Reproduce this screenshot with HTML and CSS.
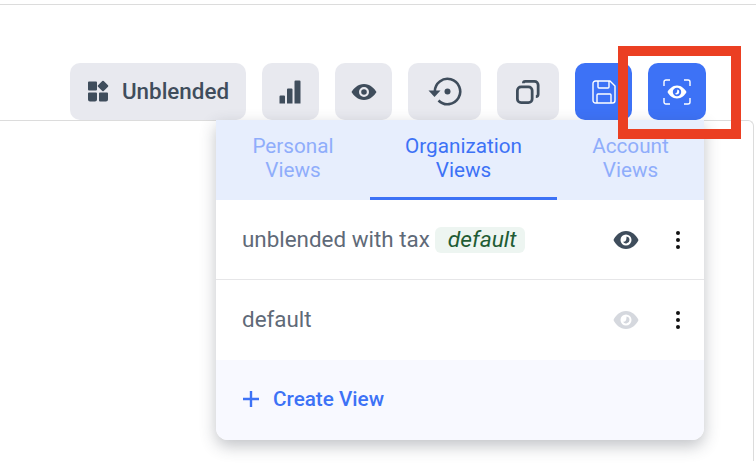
FILE: index.html
```html
<html>
	<head>
		<title>Views</title>
		<meta name="viewport" content="width=device-width, initial-scale=1">
		<link rel="stylesheet" href="styles.css">
	</head>
	<body>

		<div class="topLine"></div>

		<div class="toolbar">
			<button class="btn btnWide">
				<svg width="22" height="22" viewBox="0 0 22 22"><path fill="#3f4d5c" d="M1 2.500a1 1 0 0 1 1-1h7a1 1 0 0 1 1 1v7a1 1 0 0 1-1 1H2a1 1 0 0 1-1-1zM15.300 1l.7-.2.7.2 4.300 4.300a1 1 0 0 1 0 1.400l-4.300 4.300a1 1 0 0 1-1.400 0l-4.300-4.300a1 1 0 0 1 0-1.400zM1 13.500a1 1 0 0 1 1-1h7a1 1 0 0 1 1 1v6a2 2 0 0 1-2 2H3a2 2 0 0 1-2-2zM12 13.500a1 1 0 0 1 1-1h7a1 1 0 0 1 1 1v6a2 2 0 0 1-2 2h-6a1 1 0 0 1-1-1z"/></svg>
				Unblended
			</button>
			<button class="btn">
				<svg width="24" height="24" viewBox="0 0 24 24"><path fill="#3f4d5c" d="M.5 16.500a1 1 0 0 1 1-1H5a1 1 0 0 1 1 1v7H.5zM8 9.500a1 1 0 0 1 1-1h3.500a1 1 0 0 1 1 1v14H8zM15.500 1.500a1 1 0 0 1 1-1h4a1 1 0 0 1 1 1v22h-6z"/></svg>
			</button>
			<button class="btn">
				<svg width="26" height="26" viewBox="0 0 26 26"><path fill="#3f4d5c" fill-rule="evenodd" d="M13 5c6 0 10.500 4.500 12.500 8-2 3.500-6.500 8-12.500 8S2.500 16.500.5 13C2.500 9.500 7 5 13 5zm0 3a5 5 0 1 0 0 10 5 5 0 0 0 0-10zm0 2.200a2.800 2.800 0 1 1 0 5.600 2.800 2.800 0 0 1 0-5.600z"/></svg>
			</button>
			<button class="btn btnHistory">
				<svg width="34" height="30" viewBox="0 0 34 30"><path fill="none" stroke="#3f4d5c" stroke-width="2.600" d="M6.800 14.500A12.700 12.700 0 1 1 10.500 23.500"/><path fill="#3f4d5c" d="M.5 13.500h12l-6 6.500z"/><circle cx="19.500" cy="14.500" r="3" fill="#3f4d5c"/></svg>
			</button>
			<button class="btn btnCopy">
				<svg width="24" height="24" viewBox="0 0 26 26"><g fill="none" stroke="#3f4d5c" stroke-width="3"><rect x="1.500" y="7.500" width="16" height="17" rx="4"/><path d="M8 3.500a2 2 0 0 1 2-2h10a4 4 0 0 1 4 4v10a2.500 2.500 0 0 1-2.500 2.500"/></g></svg>
			</button>
			<button class="btn btnBlue">
				<svg width="24" height="24" viewBox="0 0 24 24"><g fill="none" stroke="#fff" stroke-width="1.400" stroke-linejoin="round"><path d="M1 3.500A2.500 2.500 0 0 1 3.500 1H18l5 5v14.500a2.500 2.500 0 0 1-2.500 2.500h-17A2.500 2.500 0 0 1 1 20.500z"/><path d="M6 1v6a1 1 0 0 0 1 1h9a1 1 0 0 0 1-1V1"/><path d="M5 23v-8a1 1 0 0 1 1-1h12a1 1 0 0 1 1 1v8"/></g></svg>
			</button>
			<button class="btn btnBlue btnLast">
				<svg width="28" height="26" viewBox="0 0 28 26"><g fill="none" stroke="#fff" stroke-width="1.400"><path d="M1 7V3a2 2 0 0 1 2-2h4M21 1h4a2 2 0 0 1 2 2v4M27 19v4a2 2 0 0 1-2 2h-4M7 25H3a2 2 0 0 1-2-2v-4"/></g><path fill="#fff" fill-rule="evenodd" d="M14 6.500c4.500 0 8 3.500 9.500 6.500-1.500 3-5 6.500-9.500 6.500S6 16 4.500 13C6 10 9.500 6.500 14 6.500zm0 2.300a4.200 4.200 0 1 0 0 8.400 4.200 4.200 0 0 0 0-8.400zm.3 1.700a2.500 2.500 0 0 1 2 2.600 2.500 2.500 0 0 1-4.500 1.300c1.500.2 2.600-.8 2.500-3.900z"/></svg>
			</button>
		</div>

		<div class="card"></div>

		<div class="menu">
			<div class="tabs">
				<div class="tab tabPersonal">Personal<br/>Views</div>
				<div class="tab tabOrg">Organization<br/>Views</div>
				<div class="tab tabAccount">Account<br/>Views</div>
			</div>

			<div class="row rowLine">
				<span class="rowName">unblended with tax</span>
				<span class="tag">default</span>
				<svg class="rowEye" width="26" height="20" viewBox="0 0 26 20"><path fill="#3f4d5c" fill-rule="evenodd" d="M13 1c6 0 10.500 4.500 12.500 9-2 4.500-6.500 9-12.500 9S2.500 14.500.5 10C2.500 5.500 7 1 13 1zm0 3.500a5.500 5.500 0 1 0 0 11 5.500 5.500 0 0 0 0-11zm.5 2a3.500 3.500 0 0 1 3 3.500 3.500 3.500 0 0 1-6.500 1.800c2 .3 3.600-1 3.500-5.300z"/></svg>
				<div class="dots"><i></i><i></i><i></i></div>
			</div>

			<div class="row">
				<span class="rowName rowNameLast">default</span>
				<svg class="rowEye" width="26" height="20" viewBox="0 0 26 20"><path fill="#d5d8de" fill-rule="evenodd" d="M13 1c6 0 10.500 4.500 12.500 9-2 4.500-6.500 9-12.500 9S2.500 14.500.5 10C2.500 5.500 7 1 13 1zm0 3.500a5.500 5.500 0 1 0 0 11 5.500 5.500 0 0 0 0-11zm.5 2a3.500 3.500 0 0 1 3 3.500 3.500 3.500 0 0 1-6.500 1.800c2 .3 3.600-1 3.500-5.300z"/></svg>
				<div class="dots"><i></i><i></i><i></i></div>
			</div>

			<div class="createRow">
				<svg width="18" height="18" viewBox="0 0 18 18"><path fill="none" stroke="#3d72f6" stroke-width="2.400" d="M9 1v16M1 9h16"/></svg>
				Create View
			</div>
		</div>

		<div class="redBox"></div>

	</body>
</html>
```

FILE: styles.css
```css
body
{
	margin: 0;
	width: 756px;
	height: 466px;
	overflow: hidden;
	position: relative;
	background-color: white;
	font-family: Roboto, "Liberation Sans", sans-serif;
}

.topLine
{
	height: 1px;
	margin-top: 4px;
	background-color: #dcdcdc;
}

.toolbar
{
	display: flex;
	justify-content: flex-end;
	gap: 16px;
	margin-top: 58px;
	padding-right: 50px;
}

.btn
{
	display: flex;
	align-items: center;
	justify-content: center;
	width: 57px;
	height: 57px;
	padding: 0;
	border: none;
	border-radius: 10px;
	background-color: #e8e9ef;
	color: #3f4d5c;
	font-family: Roboto, "Liberation Sans", sans-serif;
	font-size: 22.4px;
	font-weight: 500;
}

.btnWide
{
	width: 176px;
	gap: 13px;
	padding-bottom: 1px;
}

.btnHistory
{
	width: 73px;
}

.btnCopy
{
	width: 62px;
}

.btnBlue
{
	background-color: #3d72f6;
}

.btnLast
{
	width: 58px;
}

.card
{
	height: 340px;
	margin-right: 2px;
	border-top: 1px solid #dcdcdc;
	border-right: 1px solid #dcdcdc;
	border-top-right-radius: 6px;
}

.menu
{
	position: absolute;
	left: 216px;
	top: 120px;
	width: 488px;
	height: 320px;
	display: flex;
	flex-direction: column;
	border-radius: 0 0 12px 12px;
	overflow: hidden;
	background-color: white;
	box-shadow: 0 6px 16px rgba(50, 55, 70, 0.3);
}

.tabs
{
	display: flex;
	height: 80px;
	background-color: #e7eefd;
}

.tab
{
	box-sizing: border-box;
	height: 80px;
	padding-top: 14px;
	text-align: center;
	font-size: 20.7px;
	line-height: 24px;
	color: #8fadfb;
}

.tabPersonal
{
	width: 154px;
}

.tabOrg
{
	width: 187px;
	color: #3d72f6;
	border-bottom: 3px solid #3d72f6;
}

.tabAccount
{
	width: 147px;
}

.row
{
	box-sizing: border-box;
	display: flex;
	align-items: center;
	height: 80px;
	padding-left: 26px;
}

.rowLine
{
	border-bottom: 1px solid #e6e6e8;
}

.rowName
{
	padding-bottom: 1px;
	font-size: 22.4px;
	color: #5f6a78;
}

.rowNameLast
{
	padding-bottom: 3px;
}

.tag
{
	margin-left: 5px;
	padding: 0 9px 0 13px;
	height: 26px;
	line-height: 26px;
	border-radius: 6px;
	background-color: #edf5f1;
	color: #1f5c34;
	font-size: 22.8px;
	font-style: italic;
}

.rowEye
{
	margin-left: auto;
}

.dots
{
	display: flex;
	flex-direction: column;
	gap: 3px;
	margin-left: 37px;
	margin-right: 24px;
}

.dots i
{
	display: block;
	width: 4px;
	height: 4px;
	border-radius: 100%;
	background-color: #111;
}

.createRow
{
	display: flex;
	align-items: center;
	gap: 13px;
	height: 78px;
	padding-bottom: 2px;
	padding-left: 26px;
	background-color: #f8f9ff;
	color: #3d72f6;
	font-size: 20.7px;
	font-weight: 500;
}

.redBox
{
	position: absolute;
	left: 618px;
	top: 46px;
	width: 123px;
	height: 93px;
	box-sizing: border-box;
	border: 10px solid #eb3f22;
}
```
